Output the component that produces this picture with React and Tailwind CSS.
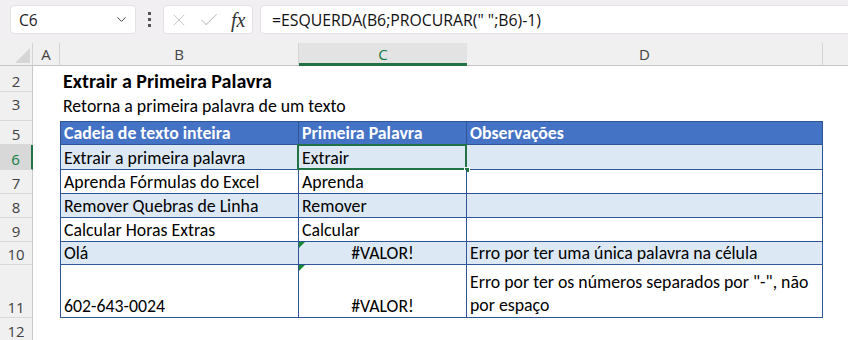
import React from 'react';
import { ChevronDown, X, Check } from 'lucide-react';

const cellFont = "font-['Carlito','Lato',sans-serif] text-[17.8px] leading-[20px]";
const uiFont = "font-['Open_Sans','Noto_Sans',sans-serif]";

function RowNum({ n, selected, pb = 'pb-0' }) {
  return (
    <div
      className={`w-[33px] shrink-0 flex items-end justify-center ${pb} ${uiFont} text-[15px] leading-[20px] border-b border-[#d9d9d9] ${
        selected
          ? 'bg-[#d8d8d8] text-[#107c41] border-r-2 border-r-[#217346]'
          : 'bg-[#f0f0f0] text-[#424242] border-r border-r-[#c8c8c8]'
      }`}
    >
      {n}
    </div>
  );
}

const bd = 'border-[#2f5597]';

function Row({ n, h, selected, pb, children }) {
  return (
    <div className={`flex ${h}`}>
      <RowNum n={n} selected={selected} pb={pb} />
      {children}
    </div>
  );
}

function Cell({ w, className = '', children }) {
  return <div className={`${w} shrink-0 flex items-end overflow-visible whitespace-nowrap ${className}`}>{children}</div>;
}

function TableRow({ n, h, banded, b, c, d, selected, cAlign, err, pb = 'pb-[1px]', dpb }) {
  const bg = banded ? 'bg-[#dde8f5]' : 'bg-white';
  return (
    <Row n={n} h={h} selected={selected}>
      <div className="w-[27px] shrink-0" />
      <Cell w="w-[239px]" className={`${bg} border-l border-r border-b ${bd} pl-[3px] ${pb}`}>{b}</Cell>
      <Cell w="w-[168px]" className={`relative ${bg} border-r border-b ${bd} ${pb} ${cAlign || 'pl-[3px]'}`}>
        {c}
        {err && (
          <div className="absolute top-0 left-0 w-0 h-0 border-t-[6px] border-r-[6px] border-t-[#1a8a35] border-r-transparent" />
        )}
        {selected && (
          <>
            <div className="absolute left-[-2px] top-[-1px] right-[-1px] bottom-[-1px] border-2 border-[#217346]" />
            <div className="absolute right-[-4px] bottom-[-4px] w-[6px] h-[6px] bg-[#217346] border border-white" />
          </>
        )}
      </Cell>
      <Cell w="w-[356px]" className={`${bg} border-r border-b ${bd} pl-[3px] ${dpb || pb}`}>{d}</Cell>
      <div className="flex-1" />
    </Row>
  );
}

export default function App() {
  return (
    <div className={`w-[848px] h-[340px] overflow-hidden bg-white text-black ${cellFont}`}>
      {/* formula bar */}
      <div className="h-[43px] bg-[#f1eff1] flex items-start pt-[5px] overflow-hidden">
        <div className={`ml-[10px] w-[126px] h-[29px] bg-white border border-[#e3e1e3] rounded-[4px] flex items-center justify-between pl-[8px] pr-[6px] ${uiFont} text-[15.5px] leading-[20px] text-[#222]`}>
          <span>C6</span>
          <ChevronDown size={15} strokeWidth={1.6} className="text-[#444]" />
        </div>
        <div className="w-[27px] h-[29px] flex flex-col items-center justify-center gap-[3px]">
          <div className="w-[3px] h-[3px] bg-[#555]" />
          <div className="w-[3px] h-[3px] bg-[#555]" />
          <div className="w-[3px] h-[3px] bg-[#555]" />
        </div>
        <div className="w-[90px] h-[29px] bg-white border border-[#e3e1e3] rounded-[4px] flex items-center pl-[5px]">
          <X size={20} strokeWidth={1.1} className="text-[#c2c2c2]" />
          <Check size={22} strokeWidth={1.1} className="text-[#c2c2c2] ml-[9px]" />
          <span className="ml-[11px] font-['Liberation_Serif',serif] italic text-[20px] text-[#333] leading-none">fx</span>
        </div>
        <div className={`ml-[7px] flex-1 h-[29px] mr-[-10px] bg-white border border-[#e3e1e3] rounded-[4px] flex items-center pl-[11px] ${uiFont} text-[15.8px] leading-[20px] text-[#111] whitespace-nowrap`}>
          =ESQUERDA(B6;PROCURAR(" ";B6)-1)
        </div>
      </div>

      {/* column headers */}
      <div className={`flex h-[23px] bg-[#f0f0f0] border-b border-[#c6c6c6] ${uiFont} text-[15px] leading-[20px] text-[#424242]`}>
        <div className="w-[33px] shrink-0 relative border-r border-[#d4d4d4]">
          <svg className="absolute left-[14px] top-[5px]" width="16" height="15" viewBox="0 0 16 15">
            <polygon points="16,0 16,15 1,15" fill="#d6d6d6" />
          </svg>
        </div>
        <div className="w-[27px] shrink-0 flex items-center justify-center border-r border-[#d4d4d4]">A</div>
        <div className="w-[239px] shrink-0 flex items-center justify-center border-r border-[#d4d4d4]">B</div>
        <div className="w-[168px] shrink-0 flex items-center justify-center bg-[#e3e3e3] text-[#107c41] border-b-[3px] border-[#217346] mb-[-1px] pt-[2px]">C</div>
        <div className="w-[356px] shrink-0 flex items-center justify-center border-r border-[#d4d4d4]">D</div>
        <div className="flex-1" />
      </div>

      {/* row 2 */}
      <Row n="2" h="h-[26px]">
        <div className="w-[27px] shrink-0" />
        <Cell w="w-[239px]" className="pl-[3px] pb-0 font-bold text-[20px] leading-[22px]">Extrair a Primeira Palavra</Cell>
      </Row>
      {/* row 3 */}
      <Row n="3" h="h-[29px]" pb="pb-[6px]">
        <div className="w-[27px] shrink-0" />
        <Cell w="w-[239px]" className="pl-[3px] pb-[5px]">Retorna a primeira palavra de um texto</Cell>
      </Row>

      {/* header row 5 */}
      <Row n="5" h="h-[24px]">
        <div className="w-[27px] shrink-0" />
        <Cell w="w-[239px]" className={`bg-[#4472c4] text-white font-bold border-l border-r border-b border-t ${bd} pl-[3px] pb-[1px]`}>Cadeia de texto inteira</Cell>
        <Cell w="w-[168px]" className={`bg-[#4472c4] text-white font-bold border-r border-b border-t ${bd} pl-[3px] pb-[1px]`}>Primeira Palavra</Cell>
        <Cell w="w-[356px]" className={`bg-[#4472c4] text-white font-bold border-r border-b border-t ${bd} pl-[3px] pb-[1px]`}>Observações</Cell>
        <div className="flex-1" />
      </Row>

      <TableRow n="6" h="h-[25px]" banded selected b="Extrair a primeira palavra" c="Extrair" d="" />
      <TableRow n="7" h="h-[24px]" b="Aprenda Fórmulas do Excel" c="Aprenda" d="" />
      <TableRow n="8" h="h-[24px]" banded b="Remover Quebras de Linha" c="Remover" d="" />
      <TableRow n="9" h="h-[24px]" b="Calcular Horas Extras" c="Calcular" d="" />
      <TableRow n="10" h="h-[23px]" banded err b="Olá" c="#VALOR!" cAlign="justify-center" d="Erro por ter uma única palavra na célula" />
      <TableRow
        n="11"
        h="h-[53px]"
        err
        b="602-643-0024"
        c="#VALOR!"
        cAlign="justify-center"
        dpb="pb-0"
        d={<span className="leading-[23px]">Erro por ter os números separados por "-", não<br />por espaço</span>}
      />
      <Row n="12" h="h-[24px]">
        <div className="flex-1" />
      </Row>
    </div>
  );
}
